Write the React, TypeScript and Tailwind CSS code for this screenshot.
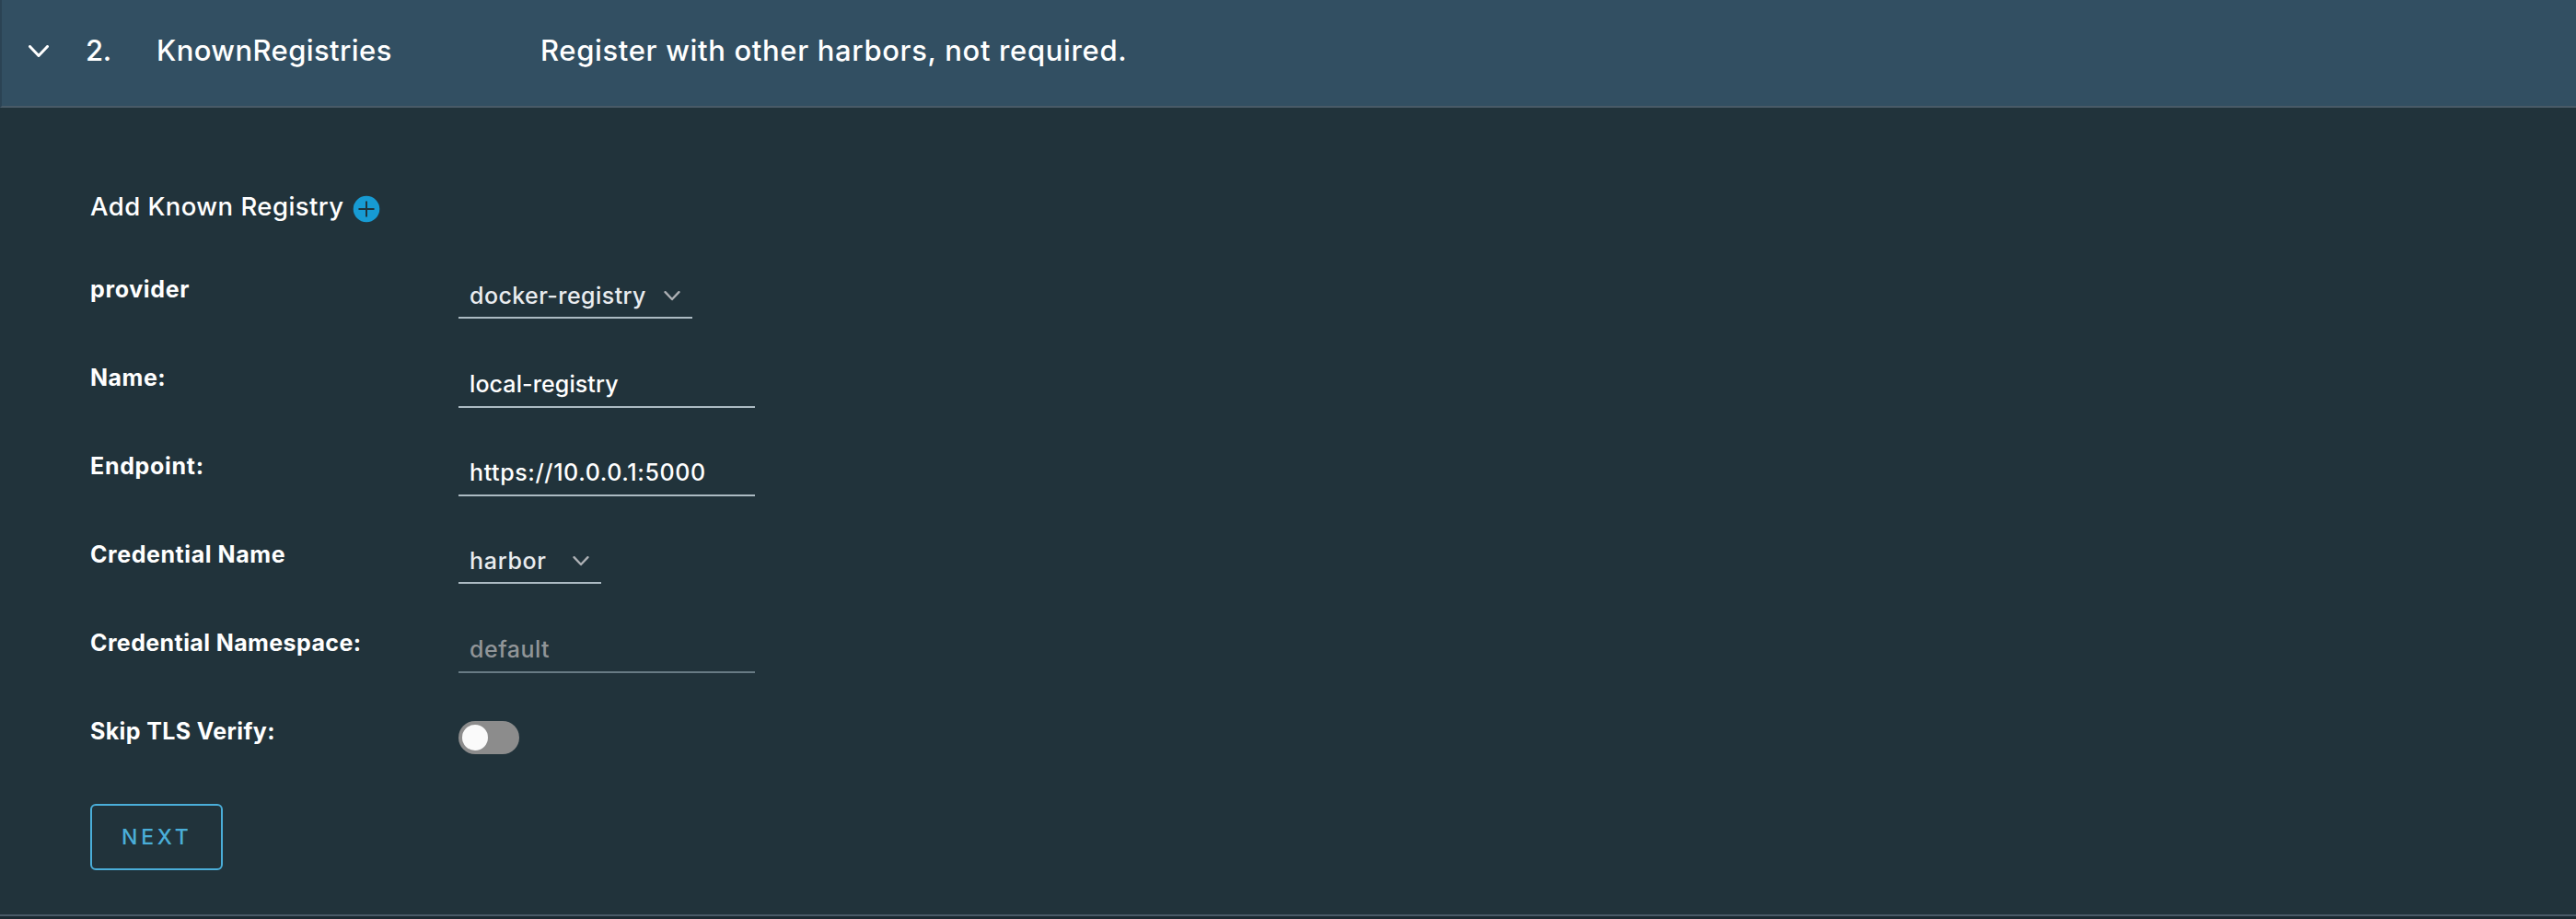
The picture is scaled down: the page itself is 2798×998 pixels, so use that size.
import { useState, type ReactNode } from "react";

function Chevron({ className }: { className: string }) {
  return (
    <svg viewBox="0 0 22 14" fill="none" strokeLinecap="round" strokeLinejoin="round" className={className}>
      <path d="M1.5 1.5L11 11.5L20.5 1.5" stroke="currentColor" strokeWidth="3" />
    </svg>
  );
}

function Row({ label, tracking, children }: { label: string; tracking: string; children: ReactNode }) {
  return (
    <div className="flex h-24 items-start last:h-[95px]">
      <div className="w-[400px] shrink-0 text-[25px] leading-8 font-bold">
        <span className={tracking}>{label}</span>
      </div>
      {children}
    </div>
  );
}

function Select({ value, className, tracking }: { value: string; className: string; tracking: string }) {
  return (
    <button className={`flex h-12 items-center justify-between border-b-2 border-[#acbbc3] pr-[13px] pl-3 text-[25px] leading-[46px] text-[#e9ecef] ${className}`}>
      <span className={tracking}>{value}</span>
      <Chevron className="h-[11px] w-[18px] text-[#adb0b4]" />
    </button>
  );
}

function Field({ value, border, tracking }: { value: string; border: string; tracking: string }) {
  return (
    <div className={`h-[49px] w-[322px] border-b-2 pl-3 text-[25px] leading-[46px] ${border}`}>
      <span className={tracking}>{value}</span>
    </div>
  );
}

export default function App() {
  const [skip, setSkip] = useState(false);
  return (
    <div className="h-[998px] w-full overflow-hidden bg-[#1b2a32] font-['Inter','Noto_Sans',sans-serif] font-medium text-white">
      <header className="flex h-[117px] items-start border-b-2 border-l-2 border-b-[#495a67] border-l-[#2b4354] bg-[#324f62] pt-[37px] text-[31px] leading-9">
        <Chevron className="mt-[12px] ml-[29px] h-[14px] w-[22px] shrink-0" />
        <span className="ml-[40px] w-[77px] tracking-[-0.3px]">2.</span>
        <span className="w-[417px]"><span className="tracking-[0.4px]">KnownRegistries</span></span>
        <span><span className="tracking-[0.65px]">Register with other harbors, not required.</span></span>
      </header>
      <main className="border-b-2 border-[#495a67] bg-[#21333b] pt-[89px] pb-12 pl-[98px]">
        <div className="flex h-9 items-center text-[27.5px] leading-9">
          <span className="w-[285px]"><span className="tracking-[0.45px]">Add Known Registry</span></span>
          <svg viewBox="0 0 30 30" className="mt-[6px] h-[30px] w-[30px]">
            <circle cx="15" cy="15" r="14.3" fill="#179bd3" />
            <path d="M15 7.2V22.8M7.2 15H22.8" stroke="#21333b" strokeWidth="2" strokeLinecap="round" />
          </svg>
        </div>
        <div className="mt-14">
          <Row label="provider" tracking="tracking-[0.65px]">
            <Select value="docker-registry" className="w-[254px]" tracking="tracking-[0.43px]" />
          </Row>
          <Row label="Name:" tracking="tracking-[0.5px]">
            <Field value="local-registry" border="border-[#acbbc3]" tracking="tracking-[0.1px]" />
          </Row>
          <Row label="Endpoint:" tracking="tracking-[0.7px]">
            <Field value="https://10.0.0.1:5000" border="border-[#acbbc3]" tracking="tracking-[0.6px]" />
          </Row>
          <Row label="Credential Name" tracking="tracking-[0.57px]">
            <Select value="harbor" className="w-[155px]" tracking="tracking-[0.7px]" />
          </Row>
          <Row label="Credential Namespace:" tracking="tracking-[0.4px]">
            <Field value="default" border="border-[#687b84] text-[#919598]" tracking="tracking-[0.5px]" />
          </Row>
          <Row label="Skip TLS Verify:" tracking="tracking-[0.37px]">
            <button
              role="switch"
              aria-checked={skip}
              onClick={() => setSkip(!skip)}
              className={`mt-[5px] flex h-9 w-[66px] items-center rounded-full bg-[#8c8c8c] px-1 ${skip ? "justify-end" : "justify-start"}`}
            >
              <span className="h-7 w-7 rounded-full bg-[#fafafa]" />
            </button>
          </Row>
        </div>
        <button className="flex h-[72px] w-36 items-center rounded-md border-2 border-[#4aaed9] pl-[32px] text-[23px] leading-8 font-medium text-[#4aaed9]">
          <span className="tracking-[3.8px]">NEXT</span>
        </button>
      </main>
    </div>
  );
}
